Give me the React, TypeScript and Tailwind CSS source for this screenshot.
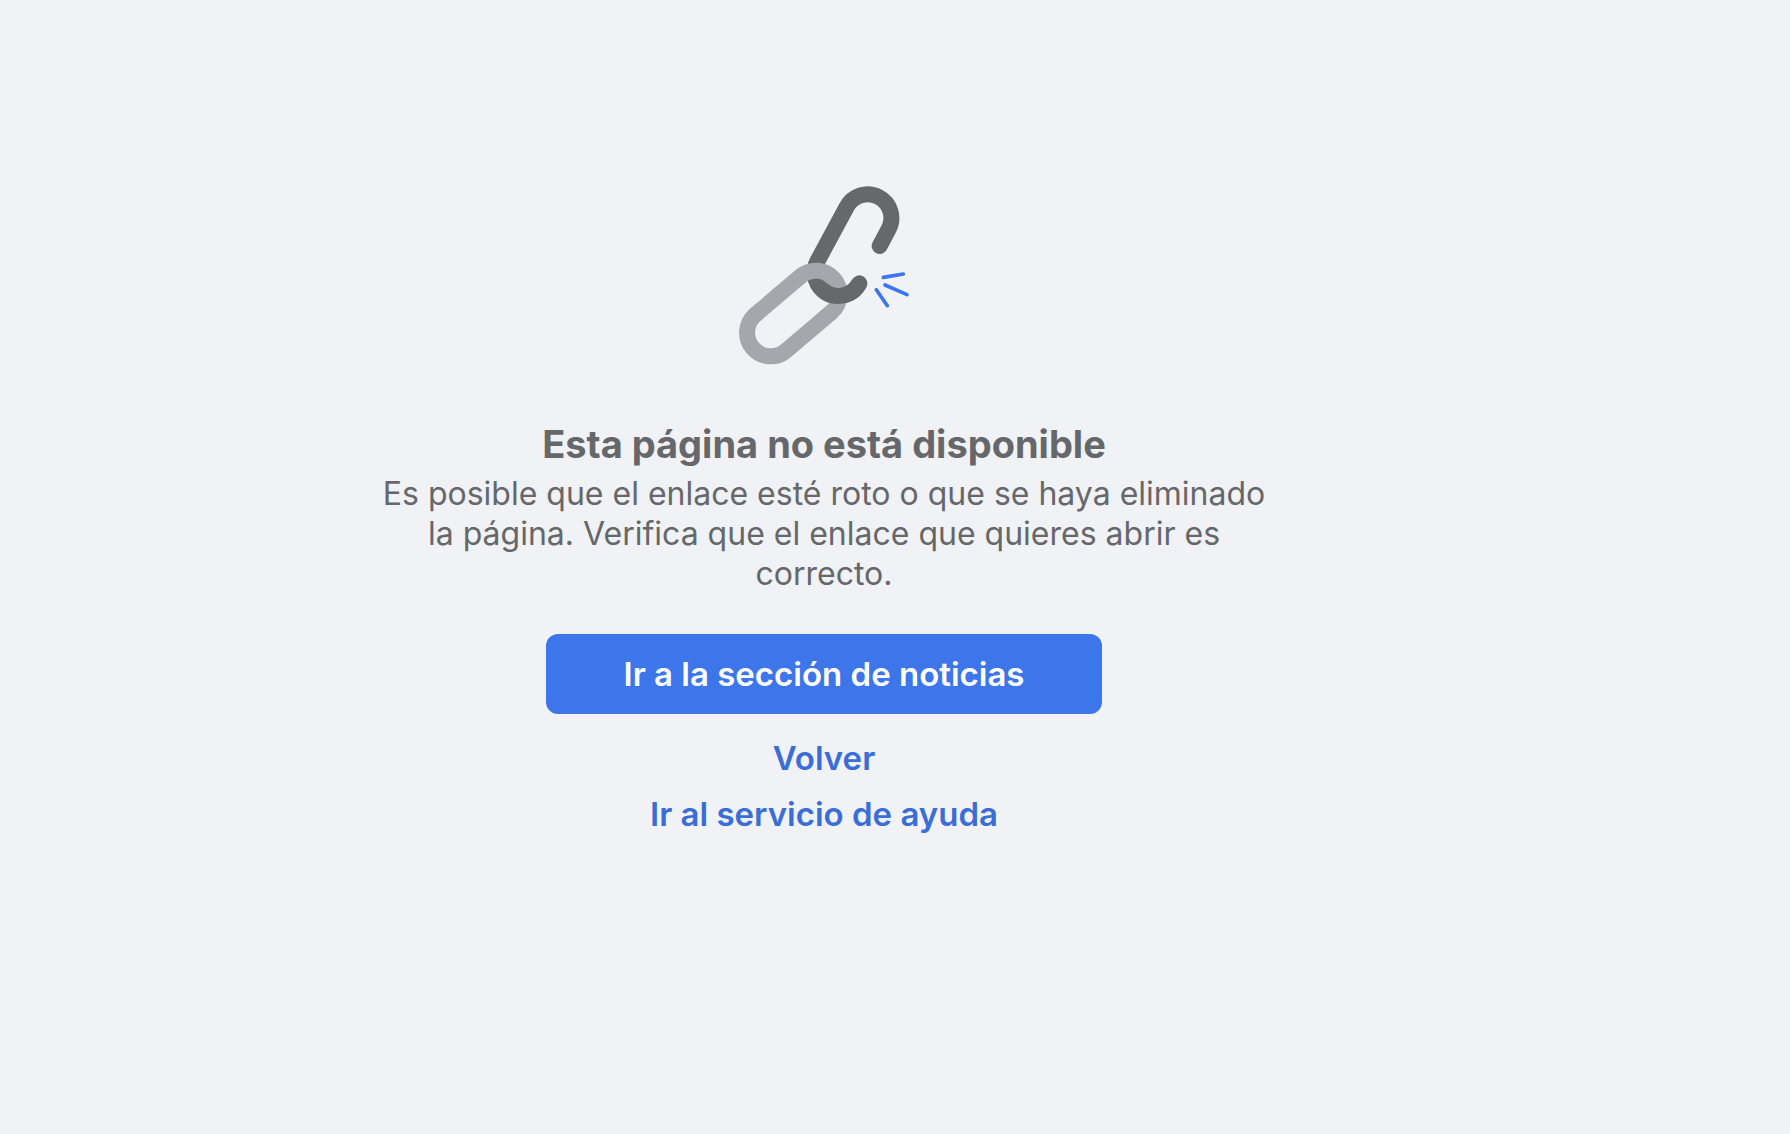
function BrokenLink() {
  return (
    <svg viewBox="-3 0 630 630" className="size-[210px]" fill="none" aria-hidden="true">
      <g stroke="#67686c" strokeWidth="48" strokeLinecap="round">
        <path d="M479 228 L506 177 A71 71 0 0 0 380 111 L292 274 A71 71 0 0 0 418 340" />
      </g>
      <path
        d="M244 317 L104 436 A71 71 0 0 0 196 544 L336 425 A71 71 0 0 0 244 317 Z"
        stroke="#a4a7ab"
        strokeWidth="48"
      />
      <path d="M305 357 A71 71 0 0 0 418 340" stroke="#67686c" strokeWidth="48" />
      <g stroke="#3d76ec" strokeWidth="11" strokeLinecap="round">
        <path d="M490 322 L550 312" />
        <path d="M495 345 L561 374" />
        <path d="M469 359 L502 407" />
      </g>
    </svg>
  );
}

export default function App() {
  return (
    <div className="min-h-screen bg-[#f0f2f6] pt-[170px] pr-[142px] font-['Inter',sans-serif] text-[#66676b]">
      <main className="mx-auto flex w-full max-w-[900px] flex-col items-center text-center">
        <BrokenLink />
        <h1 className="mt-10 text-[38px] leading-[48px] font-bold">Esta página no está disponible</h1>
        <p className="mt-1.5 text-[32px] leading-10">
          Es posible que el enlace esté roto o que se haya eliminado la página. Verifica que el enlace que
          quieres abrir es correcto.
        </p>
        <a
          href="#noticias"
          className="mt-10 w-full max-w-[556px] rounded-xl bg-[#3d76ea] py-5 text-[33px] leading-10 font-semibold text-white"
        >
          Ir a la sección de noticias
        </a>
        <button type="button" className="mt-6 text-[33px] leading-10 font-semibold text-[#3b6dd6]">
          Volver
        </button>
        <a href="#ayuda" className="mt-4 text-[33px] leading-10 font-semibold text-[#3b6dd6]">
          Ir al servicio de ayuda
        </a>
      </main>
    </div>
  );
}
